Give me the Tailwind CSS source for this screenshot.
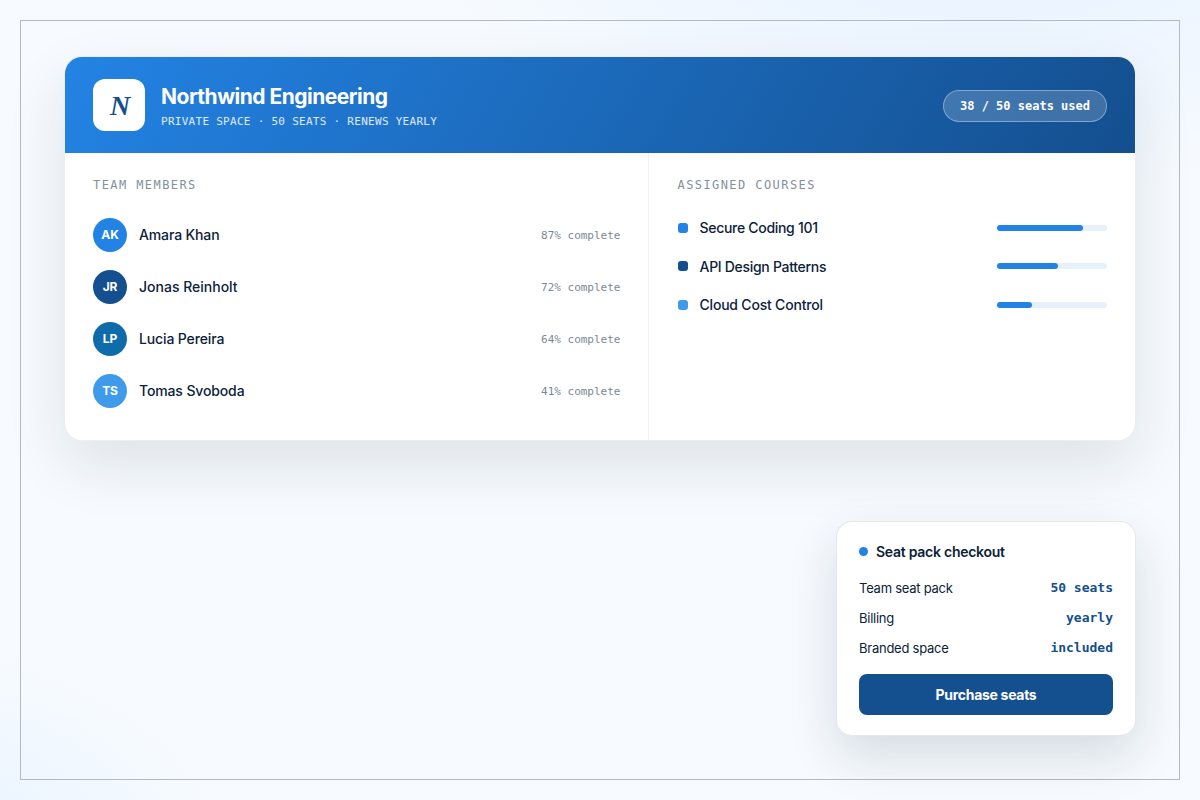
<!DOCTYPE html>
<html lang="en">
<head>
    <meta charset="UTF-8">
    <meta name="viewport" content="width=device-width, initial-scale=1.0">
    <title>Northwind Engineering</title>
    <script src="https://cdn.jsdelivr.net/npm/@tailwindcss/browser@4"></script>
</head>
<body class="h-[800px] overflow-hidden p-5 font-['Inter',sans-serif] text-[#0b2239] bg-[radial-gradient(820px_400px_at_82%_-10%,#e6f1ff,transparent_70%),radial-gradient(600px_400px_at_-10%_110%,#e3f0ff,transparent_60%),linear-gradient(#f7fbff,#f7fbff)]">
    <main class="h-[760px] border border-[#b3bac6] px-[43px] pt-[35px] pb-[43px] flex flex-col justify-between">

        <section class="h-[385px] bg-white border border-[#0b2239]/8 rounded-[18px] overflow-hidden shadow-[0_24px_60px_rgba(16,30,48,0.11)] flex flex-col">
            <header class="h-24 shrink-0 px-7 flex items-center gap-4 text-white bg-[linear-gradient(120deg,#2383e4,#144f8f)]">
                <div class="size-[52px] rounded-xl bg-white flex items-center justify-center pl-0.5 pt-0.5 text-[#144f8f] font-['Liberation_Serif',serif] font-bold italic text-[28px] leading-none">N</div>
                <div class="pt-[3px]">
                    <h1 class="text-[21px] leading-7 font-bold tracking-[-0.5px]">Northwind Engineering</h1>
                    <p class="font-['DejaVu_Sans_Mono',monospace] text-[11px] leading-4 tracking-[0.28px] mt-[3px] text-white/85">PRIVATE SPACE · 50 SEATS · RENEWS YEARLY</p>
                </div>
                <div class="ml-auto mt-px h-8 px-4 rounded-full border border-white/35 bg-white/18 flex items-center font-['DejaVu_Sans_Mono',monospace] font-bold text-[12px]">38 / 50 seats used</div>
            </header>

            <div class="flex-1 grid grid-cols-[583px_1fr]">
                <div class="pl-7 pr-[27.5px] pt-6">
                    <h2 class="font-['DejaVu_Sans_Mono',monospace] text-[12px] leading-4 tracking-[1.42px] text-[#84909e] mb-[15.6px]">TEAM MEMBERS</h2>
                    <ul class="text-[14px] font-medium tracking-[-0.13px]">
                        <li class="h-[52px] flex items-center gap-3">
                            <span class="size-[34px] rounded-full bg-[#2383e4] text-white text-[12px] font-bold flex items-center justify-center">AK</span>
                            <span>Amara Khan</span>
                            <span class="ml-auto pt-[3px] font-['DejaVu_Sans_Mono',monospace] text-[11px] font-normal tracking-normal text-[#7b8896]">87% complete</span>
                        </li>
                        <li class="h-[52px] flex items-center gap-3">
                            <span class="size-[34px] rounded-full bg-[#144f8f] text-white text-[12px] font-bold flex items-center justify-center">JR</span>
                            <span class="tracking-normal">Jonas Reinholt</span>
                            <span class="ml-auto pt-[3px] font-['DejaVu_Sans_Mono',monospace] text-[11px] font-normal tracking-normal text-[#7b8896]">72% complete</span>
                        </li>
                        <li class="h-[52px] flex items-center gap-3">
                            <span class="size-[34px] rounded-full bg-[#0f6cab] text-white text-[12px] font-bold flex items-center justify-center">LP</span>
                            <span>Lucia Pereira</span>
                            <span class="ml-auto pt-[3px] font-['DejaVu_Sans_Mono',monospace] text-[11px] font-normal tracking-normal text-[#7b8896]">64% complete</span>
                        </li>
                        <li class="h-[52px] flex items-center gap-3">
                            <span class="size-[34px] rounded-full bg-[#3f9bea] text-white text-[12px] font-bold flex items-center justify-center">TS</span>
                            <span>Tomas Svoboda</span>
                            <span class="ml-auto pt-[3px] font-['DejaVu_Sans_Mono',monospace] text-[11px] font-normal tracking-normal text-[#7b8896]">41% complete</span>
                        </li>
                    </ul>
                </div>

                <div class="pl-[28.5px] pr-7 pt-6 border-l border-[#0b2239]/6">
                    <h2 class="font-['DejaVu_Sans_Mono',monospace] text-[12px] leading-4 tracking-[1.42px] text-[#84909e] mb-[15.6px]">ASSIGNED COURSES</h2>
                    <ul class="text-[14px] font-medium tracking-[-0.3px]">
                        <li class="h-[38.5px] flex items-center gap-3">
                            <span class="size-2.5 rounded-[3px] bg-[#2383e4]"></span>
                            <span>Secure Coding 101</span>
                            <span class="ml-auto w-[110px] h-1.5 rounded-full bg-[#e6f1fc]"><span class="block h-full rounded-full bg-[#2383e4]" style="width: 78%"></span></span>
                        </li>
                        <li class="h-[38.5px] flex items-center gap-3">
                            <span class="size-2.5 rounded-[3px] bg-[#144f8f]"></span>
                            <span>API Design Patterns</span>
                            <span class="ml-auto w-[110px] h-1.5 rounded-full bg-[#e6f1fc]"><span class="block h-full rounded-full bg-[#2383e4]" style="width: 55%"></span></span>
                        </li>
                        <li class="h-[38.5px] flex items-center gap-3">
                            <span class="size-2.5 rounded-[3px] bg-[#3f9bea]"></span>
                            <span class="tracking-[-0.2px]">Cloud Cost Control</span>
                            <span class="ml-auto w-[110px] h-1.5 rounded-full bg-[#e6f1fc]"><span class="block h-full rounded-full bg-[#2383e4]" style="width: 32%"></span></span>
                        </li>
                    </ul>
                </div>
            </div>
        </section>

        <aside class="self-end w-[300px] h-[215px] bg-white border border-[#0b2239]/10 rounded-2xl px-[22px] pt-5 pb-5 flex flex-col shadow-[0_20px_50px_rgba(16,30,48,0.14)]">
            <h2 class="flex items-center gap-2 h-[19px] text-[14px] font-semibold tracking-[-0.26px]">
                <span class="size-[9px] rounded-full bg-[#2383e4]"></span>
                <span>Seat pack checkout</span>
            </h2>
            <dl class="mt-3 text-[13px]">
                <div class="h-[30px] flex items-center justify-between">
                    <dt class="pt-0.5 tracking-[-0.25px]">Team seat pack</dt>
                    <dd class="font-['DejaVu_Sans_Mono',monospace] font-bold text-[#144f8f]">50 seats</dd>
                </div>
                <div class="h-[30px] flex items-center justify-between">
                    <dt class="pt-0.5 tracking-[-0.25px]">Billing</dt>
                    <dd class="font-['DejaVu_Sans_Mono',monospace] font-bold text-[#144f8f]">yearly</dd>
                </div>
                <div class="h-[30px] flex items-center justify-between">
                    <dt class="pt-0.5 tracking-[-0.25px]">Branded space</dt>
                    <dd class="font-['DejaVu_Sans_Mono',monospace] font-bold text-[#144f8f]">included</dd>
                </div>
            </dl>
            <button class="mt-auto h-[40.6px] rounded-lg bg-[#144f8f] text-white text-[14px] font-bold tracking-[-0.3px]">Purchase seats</button>
        </aside>

    </main>
</body>
</html>
